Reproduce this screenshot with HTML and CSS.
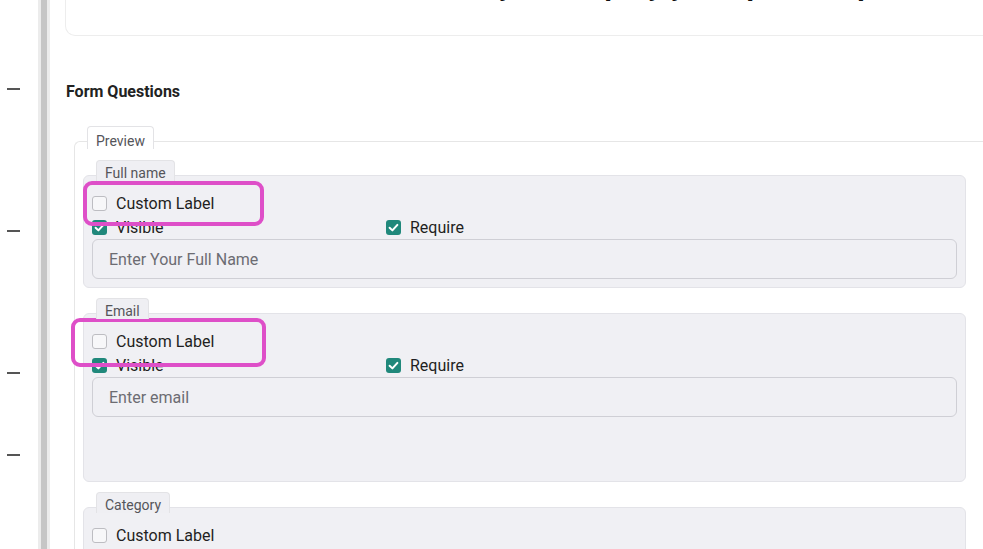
FILE: index.html
```html
<!DOCTYPE html>
<html>
    <head>
        <meta charset="utf8">
        <meta name="viewport" content="width=device-width">
        <title>Form Questions</title>
        <link rel="stylesheet" href="styles.css">
    </head>
    <body>
        <div class="page">
            <div class="gutter">
                <span class="dash"></span>
                <span class="dash"></span>
                <span class="dash"></span>
                <span class="dash dash_near"></span>
            </div>
            <div class="rail"></div>
            <div class="content">
                <div class="intro_card">
                    <h1 class="intro_title">Ready to simplify your quote request? Get a Quote</h1>
                </div>
                <h3 class="section_title">Form Questions</h3>

                <div class="preview">
                    <div class="tab preview_tab">Preview</div>
                    <div class="preview_body">

                        <div class="question">
                            <div class="tab question_tab">Full name</div>
                            <div class="question_box">
                                <label class="check_row"><span class="check"></span>Custom Label</label>
                                <div class="toggles">
                                    <label class="check_row toggle_first"><span class="check checked"><svg viewBox="0 0 15 15"><path d="M3.6 7.7 L6.4 10.4 L11.4 4.9"/></svg></span>Visible</label>
                                    <label class="check_row"><span class="check checked"><svg viewBox="0 0 15 15"><path d="M3.6 7.7 L6.4 10.4 L11.4 4.9"/></svg></span>Require</label>
                                </div>
                                <input type="text" class="question_input" placeholder="Enter Your Full Name">
                                <span class="mark mark_name"></span>
                            </div>
                        </div>

                        <div class="question">
                            <div class="tab question_tab">Email</div>
                            <div class="question_box">
                                <label class="check_row"><span class="check"></span>Custom Label</label>
                                <div class="toggles">
                                    <label class="check_row toggle_first"><span class="check checked"><svg viewBox="0 0 15 15"><path d="M3.6 7.7 L6.4 10.4 L11.4 4.9"/></svg></span>Visible</label>
                                    <label class="check_row"><span class="check checked"><svg viewBox="0 0 15 15"><path d="M3.6 7.7 L6.4 10.4 L11.4 4.9"/></svg></span>Require</label>
                                </div>
                                <input type="text" class="question_input" placeholder="Enter email">
                                <div class="extra_space"></div>
                                <span class="mark mark_email"></span>
                            </div>
                        </div>

                        <div class="question">
                            <div class="tab question_tab">Category</div>
                            <div class="question_box question_last">
                                <label class="check_row"><span class="check"></span>Custom Label</label>
                            </div>
                        </div>

                    </div>
                </div>
            </div>
        </div>
    </body>
</html>
```

FILE: styles.css
```css
html, body{
    margin:0;
    height:100%;
    overflow:hidden;
    background:#fff;
    font-family:Roboto, "Noto Sans", sans-serif;
    color:#1f1f22;
}
.page{
    display:flex;
    height:549px;
}

/* left ruler */
.gutter{
    width:38px;
    display:flex;
    flex-direction:column;
    flex-shrink:0;
}
.dash{
    display:block;
    width:13px;
    height:2px;
    margin:140px 0 0 7px;
    background:#555;
}
.dash:first-child{
    margin-top:88px;
}
.dash_near{
    margin-top:80px;
}
.rail{
    width:6px;
    flex-shrink:0;
    background:#c6c6c6;
    border-left:3px solid #ececec;
    border-right:3px solid #ececec;
}

.content{
    width:960px;
    flex-shrink:0;
}

.intro_card{
    margin-left:15px;
    height:35px;
    border:1px solid #ededed;
    border-top:none;
    border-radius:0 0 0 10px;
    overflow:hidden;
}
.intro_title{
    margin:-32px 0 0 0;
    padding-left:365px;
    font-size:29px;
    line-height:34px;
    font-weight:bold;
    letter-spacing:0.4px;
    color:#111;
    white-space:nowrap;
}

.section_title{
    margin:46px 0 0 16px;
    font-size:16px;
    line-height:20px;
    font-weight:bold;
    color:#222;
}

/* tab that sits on the top border of its box */
.tab{
    position:relative;
    z-index:1;
    align-self:flex-start;
    margin-left:13px;
    padding:0 8px;
    font-size:14px;
    line-height:16px;
    color:#55555a;
    border:1px solid #e3e3e6;
    border-bottom:none;
    border-radius:4px 4px 0 0;
}

.preview{
    display:flex;
    flex-direction:column;
    margin:24px 0 0 24px;
}
.preview_tab{
    padding-top:6px;
    background:#fff;
    margin-bottom:-8px;
}
.preview_body{
    border-top:1px solid #e6e6e6;
    border-left:1px solid #e6e6e6;
    border-radius:6px 0 0 0;
    padding:18px 44px 40px 8px;
    display:flex;
    flex-direction:column;
    gap:10px;
}

.question{
    display:flex;
    flex-direction:column;
}
.question_tab{
    padding-top:4px;
    background:#efeff3;
    margin-bottom:-6px;
}
.question_box{
    position:relative;
    background:#f0f0f4;
    border:1px solid #e3e3e8;
    border-radius:6px;
    padding:15px 8px 8px 8px;
}
.question_last{
    padding-bottom:40px;
}

.check_row{
    display:flex;
    align-items:center;
    gap:9px;
    height:24px;
    font-size:16px;
    color:#1f1f22;
    cursor:pointer;
}
.toggles{
    display:flex;
}
.toggle_first{
    width:294px;
}
.check{
    width:15px;
    height:15px;
    box-sizing:border-box;
    border:1.5px solid #bdbdc2;
    border-radius:3px;
    background:#f7f7f9;
    flex-shrink:0;
}
.check.checked{
    border:none;
    background:#20887b;
}
.check svg{
    display:block;
    width:15px;
    height:15px;
    fill:none;
    stroke:#fff;
    stroke-width:2;
    stroke-linecap:round;
    stroke-linejoin:round;
}

.question_input{
    display:block;
    width:100%;
    height:40px;
    box-sizing:border-box;
    padding:0 16px;
    border:1px solid #cfcfd5;
    border-radius:6px;
    background:#f0f0f4;
    font-family:Roboto, "Noto Sans", sans-serif;
    font-size:16px;
    color:#222;
}
.question_input::placeholder{
    color:#6c6c72;
}
.extra_space{
    height:56px;
}

/* highlight frames drawn over the rows */
.mark{
    position:absolute;
    border:4px solid #de4fc8;
    border-radius:9px;
    box-sizing:border-box;
    pointer-events:none;
}
.mark_name{
    left:-1px;
    top:5px;
    width:181px;
    height:45px;
}
.mark_email{
    left:-13px;
    top:4px;
    width:195px;
    height:49px;
}
```
